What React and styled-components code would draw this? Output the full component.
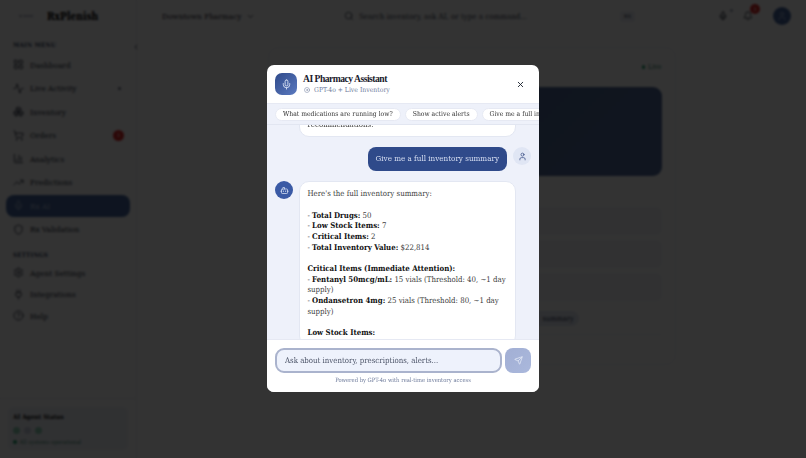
import React, { useLayoutEffect, useRef } from 'react';
import styled, { createGlobalStyle } from 'styled-components';
import {
  Activity, BarChart3, Bell, Bot, Boxes, ChevronDown, ChevronLeft, CircleHelp, Disc, LayoutGrid, Mic, Plug, Search, Send,
  Settings, Shield, ShoppingCart, TrendingUp, User, X,
} from 'lucide-react';

const slab = '"DejaVu Serif Condensed", "DejaVu Serif", "Liberation Serif", serif';

const GlobalStyle = createGlobalStyle`
  html, body { margin: 0; height: 100%; background: #fff; }
  * { box-sizing: border-box; }
  body { font-family: ${slab}; overflow: hidden; }
`;

const Shell = styled.div`
  display: flex;
  width: 806px;
  height: 458px;
  background: #fff;
`;

const Sidebar = styled.aside`
  position: relative;
  width: 137px;
  flex: none;
  display: flex;
  flex-direction: column;
  border-right: 1px solid #eef0f5;
  background: #fdfdfe;
`;

const Brand = styled.div`
  display: flex;
  align-items: center;
  gap: 14px;
  height: 32px;
  padding-left: 18px;
`;

const BrandName = styled.span`
  font-size: 10.2px;
  font-weight: 700;
  color: #000;
`;

const CollapseButton = styled.span`
  position: absolute;
  right: -6px;
  top: 41px;
  width: 12px;
  height: 12px;
  display: flex;
  align-items: center;
  justify-content: center;
  color: #111827;
`;

const SectionLabel = styled.div`
  padding: ${(p) => p.$pad};
  font-size: 6.2px;
  font-weight: 700;
  letter-spacing: 0.3px;
  color: #2c3a5a;
`;

const NavItem = styled.div`
  display: flex;
  align-items: center;
  gap: 6px;
  height: 21.5px;
  margin: ${(p) => (p.$tight ? 0 : 1)}px 6px;
  padding: 0 6px 0 8px;
  border-radius: 8px;
  font-size: 8.2px;
  color: ${(p) => (p.$active ? '#a9b8dc' : '#2a3140')};
  background: ${(p) => (p.$active ? '#46669f' : 'transparent')};
  svg { flex: none; width: 11px; height: 11px; margin-left: -1px; }
`;

const NavText = styled.span`
  flex: 1;
`;

const NavBadge = styled.span`
  width: 11px;
  height: 11px;
  border-radius: 50%;
  display: flex;
  align-items: center;
  justify-content: center;
  font-size: 5px;
  color: #fff;
  background: #dc2626;
`;

const NavDot = styled.span`
  width: 3px;
  height: 3px;
  margin-right: 3px;
  border-radius: 50%;
  background: #6b7280;
`;

const StatusWrap = styled.div`
  margin-top: auto;
  padding: 8px;
  border-top: 1px solid #eef0f5;
`;

const StatusCard = styled.div`
  height: 43px;
  padding: 6px 5px;
  border-radius: 6px;
  background: #f1f4fa;
`;

const StatusTitle = styled.div`
  font-size: 6.4px;
  font-weight: 700;
  color: #000;
`;

const StatusDots = styled.div`
  display: flex;
  gap: 4px;
  margin: 6px 0 5px;
`;

const StatusDot = styled.span`
  width: 7px;
  height: 7px;
  border-radius: 50%;
  background: ${(p) => p.$color};
`;

const StatusText = styled.div`
  display: flex;
  align-items: center;
  gap: 3px;
  font-size: 5.8px;
  color: #3d8a70;
`;

const Content = styled.div`
  flex: 1;
  min-width: 0;
  display: flex;
  flex-direction: column;
`;

const TopBar = styled.header`
  height: 32px;
  flex: none;
  display: flex;
  align-items: center;
  padding: 0 15px 0 25px;
  color: #1f2633;
`;

const Pharmacy = styled.div`
  display: flex;
  align-items: center;
  gap: 5px;
  width: 182px;
  font-size: 8.2px;
  svg { width: 9px; height: 9px; }
`;

const SearchBox = styled.div`
  display: flex;
  align-items: center;
  gap: 5px;
  width: 296px;
  height: 20px;
  padding: 0 5px 0 0;
  font-size: 7.9px;
  color: #3c4454;
  svg { width: 10px; height: 10px; }
`;

const SearchText = styled.span`
  flex: 1;
`;

const Kbd = styled.span`
  width: 15px;
  height: 11px;
  border-radius: 3px;
  background: #eceff7;
  font-size: 5px;
  text-align: center;
  line-height: 11px;
`;

const TopIcons = styled.div`
  display: flex;
  align-items: center;
  margin-left: auto;
  gap: 15px;
`;

const TopIcon = styled.span`
  position: relative;
  display: flex;
  svg { width: 10px; height: 10px; }
`;

const TopBadge = styled.span`
  position: absolute;
  top: -7px;
  left: 7px;
  width: 10px;
  height: 10px;
  border-radius: 50%;
  background: #dc2626;
  color: #fff;
  font-size: 5px;
  line-height: 10px;
  text-align: center;
`;

const MicDot = styled.span`
  position: absolute;
  top: -2px;
  right: -5px;
  width: 3px;
  height: 3px;
  border-radius: 50%;
  background: #9aa3b5;
`;

const Avatar = styled.span`
  width: 18px;
  height: 18px;
  margin-left: 5px;
  border-radius: 50%;
  display: flex;
  align-items: center;
  justify-content: center;
  color: #a9b8dc;
  background: #46669f;
  svg { width: 10px; height: 10px; }
`;

const Main = styled.main`
  flex: 1;
  display: flex;
  justify-content: center;
  padding-top: 15px;
`;

const Card = styled.section`
  width: 408px;
  height: 318px;
  padding: 13px;
  border-radius: 10px;
  border: 1px solid #f1f2f6;
`;

const CardHead = styled.div`
  display: flex;
  justify-content: flex-end;
  align-items: center;
  gap: 3px;
  height: 12px;
  margin-bottom: 14px;
  font-size: 7px;
  color: #1f7a5a;
`;

const LiveDot = styled.span`
  width: 3.5px;
  height: 3.5px;
  border-radius: 50%;
  background: #22a06b;
`;

const HeroPanel = styled.div`
  height: 89px;
  margin-bottom: 31px;
  border-radius: 9px;
  background: linear-gradient(135deg, #4c648f, #506a9c);
`;

const StatRow = styled.div`
  height: 28px;
  margin-bottom: 5px;
  border-radius: 6px;
  background: #f3f5fa;
`;

const ChipRow = styled.div`
  display: flex;
  height: 15px;
  margin: 10px 0 0 230px;
`;

const PageChip = styled.span`
  padding: 0 5px 0 31px;
  border-radius: 8px;
  background: #e3e8f3;
  color: #27324d;
  font-size: 7.4px;
  line-height: 15px;
`;

const CardRule = styled.div`
  height: 1px;
  margin-top: 8px;
  background: #f1f2f6;
`;

const Overlay = styled.div`
  position: fixed;
  inset: 0;
  display: flex;
  align-items: center;
  justify-content: center;
  background: rgba(0, 0, 0, 0.8);
  backdrop-filter: blur(1px);
`;

const Modal = styled.div`
  width: 272px;
  height: 327px;
  margin-bottom: 1px;
  display: flex;
  flex-direction: column;
  overflow: hidden;
  border-radius: 7px;
  background: #fff;
  filter: blur(0.25px);
`;

const ModalHeader = styled.div`
  height: 38px;
  flex: none;
  display: flex;
  align-items: center;
  gap: 6px;
  padding: 0 14px 0 8px;
`;

const ModalIcon = styled.span`
  width: 22px;
  height: 22px;
  flex: none;
  border-radius: 7px;
  display: flex;
  align-items: center;
  justify-content: center;
  color: #dbe4f5;
  background: linear-gradient(135deg, #2f4a8a, #5b7ac0);
  svg { width: 11px; height: 11px; }
`;

const ModalTitleBlock = styled.div`
  flex: 1;
`;

const ModalTitle = styled.div`
  font-family: "Liberation Serif", serif;
  font-size: 9.6px;
  letter-spacing: -0.5px;
  line-height: 12px;
  font-weight: 700;
  color: #1a202c;
`;

const ModalSub = styled.div`
  display: flex;
  align-items: center;
  gap: 4px;
  font-size: 6.8px;
  line-height: 10px;
  color: #6f7c9c;
  svg { width: 6px; height: 6px; margin: 0 0 0 1px; }
`;

const CloseButton = styled.span`
  display: flex;
  color: #1a202c;
  svg { width: 9px; height: 9px; }
`;

const Chips = styled.div`
  height: 22px;
  flex: none;
  display: flex;
  align-items: center;
  gap: 4px;
  padding-left: 8px;
  overflow: hidden;
  background: #eef1fa;
  border-top: 1px solid #e6e9f3;
  border-bottom: 1px solid #e2e6f1;
`;

const Chip = styled.span`
  flex: none;
  height: 13px;
  padding: 0 7px;
  border-radius: 7px;
  border: 1px solid #e6e9f3;
  background: #fff;
  color: #333;
  font-size: 6.75px;
  line-height: 11px;
  white-space: nowrap;
`;

const Messages = styled.div`
  flex: 1;
  min-height: 0;
  overflow: hidden;
  display: flex;
  flex-direction: column;
  gap: 10px;
  padding: 8px;
  background: #eef1fa;
`;

const Row = styled.div`
  display: flex;
  flex: none;
  gap: 6px;
  justify-content: ${(p) => (p.$user ? 'flex-end' : 'flex-start')};
  align-items: flex-start;
`;

const BotAvatar = styled.span`
  width: 18px;
  height: 18px;
  flex: none;
  border-radius: 50%;
  display: flex;
  align-items: center;
  justify-content: center;
  color: #dbe4f5;
  background: #3a5aa5;
  svg { width: 9px; height: 9px; }
`;

const UserAvatar = styled(BotAvatar)`
  color: #3a4f86;
  background: #e0e6f4;
`;

const BotBubble = styled.div`
  width: 217px;
  padding: 7px 4px 6px 7.5px;
  border-radius: 10px;
  border: 1px solid #e3e7f2;
  background: #fff;
  color: #3d3d3d;
  font-size: 7.8px;
  line-height: 10.67px;
`;

const UserBubble = styled.div`
  height: 24px;
  padding: 0 8px;
  border-radius: 8px;
  color: #d7dff2;
  background: #2f4a8a;
  font-size: 8px;
  line-height: 24px;
  white-space: nowrap;
`;

const Strong = styled.strong`
  font-weight: 700;
  line-height: 1;
  color: #111;
`;

const Gap = styled.div`
  height: 10.67px;
`;

const InputArea = styled.div`
  height: 53px;
  flex: none;
  padding: 8px 8px 0;
  background: #fff;
  border-top: 1px solid #e6e9f3;
`;

const InputRow = styled.div`
  display: flex;
  gap: 3px;
`;

const AskInput = styled.input`
  flex: 1;
  min-width: 0;
  height: 25px;
  padding: 0 8px;
  border: 2px solid #aab3cd;
  border-radius: 9px;
  outline: none;
  background: #eef2fc;
  font-family: ${slab};
  font-size: 7.8px;
  color: #374151;
  &::placeholder { color: #4c5468; opacity: 1; }
`;

const SendButton = styled.span`
  width: 26px;
  height: 25px;
  flex: none;
  border-radius: 8px;
  display: flex;
  align-items: center;
  justify-content: center;
  color: #e6ebf7;
  background: linear-gradient(135deg, #a2afd4, #aab8dc);
  svg { width: 9px; height: 9px; }
`;

const Powered = styled.div`
  margin-top: 3px;
  text-align: center;
  font-size: 5.8px;
  line-height: 8px;
  color: #6f7c9c;
`;

const mainMenu = [
  { icon: LayoutGrid, label: 'Dashboard' },
  { icon: Activity, label: 'Live Activity', dot: true },
  { icon: Boxes, label: 'Inventory' },
  { icon: ShoppingCart, label: 'Orders', badge: 3 },
  { icon: BarChart3, label: 'Analytics' },
  { icon: TrendingUp, label: 'Predictions' },
  { icon: Mic, label: 'Rx AI', active: true },
  { icon: Shield, label: 'Rx Validation' },
];

const settingsMenu = [
  { icon: Settings, label: 'Agent Settings' },
  { icon: Plug, label: 'Integrations' },
  { icon: CircleHelp, label: 'Help' },
];

const App = () => {
  const listRef = useRef(null);

  useLayoutEffect(() => {
    // the chat opens scrolled part way through the answer
    if (listRef.current) listRef.current.scrollTop = 32;
  }, []);

  return (
    <>
      <GlobalStyle />
      <Shell>
        <Sidebar>
          <Brand>
            <svg width="15" height="6" viewBox="0 0 15 6">
              <path d="M1 1.5 L2.5 3 L4 1.5 L2.5 4.5 Z" fill="#4b5568" />
              <rect x="5" y="2.4" width="10" height="1.2" fill="#9aa3b5" />
            </svg>
            <BrandName>RxPlenish</BrandName>
          </Brand>
          <CollapseButton><ChevronLeft size={8} /></CollapseButton>
          <SectionLabel $pad="9px 13px 5px">MAIN MENU</SectionLabel>
          {mainMenu.map((item) => (
            <NavItem key={item.label} $active={item.active}>
              <item.icon strokeWidth={1.8} />
              <NavText>{item.label}</NavText>
              {item.dot && <NavDot />}
              {item.badge && <NavBadge>{item.badge}</NavBadge>}
            </NavItem>
          ))}
          <SectionLabel $pad="10px 13px 4px">SETTINGS</SectionLabel>
          {settingsMenu.map((item) => (
            <NavItem key={item.label} $tight>
              <item.icon strokeWidth={1.8} />
              <NavText>{item.label}</NavText>
            </NavItem>
          ))}
          <StatusWrap>
            <StatusCard>
              <StatusTitle>AI Agent Status</StatusTitle>
              <StatusDots>
                <StatusDot $color="#8fd0b5" />
                <StatusDot $color="#c9d0e0" />
                <StatusDot $color="#8fd0b5" />
              </StatusDots>
              <StatusText><LiveDot />All systems operational</StatusText>
            </StatusCard>
          </StatusWrap>
        </Sidebar>
        <Content>
          <TopBar>
            <Pharmacy>Downtown Pharmacy <ChevronDown /></Pharmacy>
            <SearchBox>
              <Search />
              <SearchText>Search inventory, ask AI, or type a command...</SearchText>
              <Kbd>⌘K</Kbd>
            </SearchBox>
            <TopIcons>
              <TopIcon><Mic /><MicDot /></TopIcon>
              <TopIcon><Bell /><TopBadge>3</TopBadge></TopIcon>
              <Avatar><User /></Avatar>
            </TopIcons>
          </TopBar>
          <Main>
            <Card>
              <CardHead><LiveDot />Live</CardHead>
              <HeroPanel />
              <StatRow />
              <StatRow />
              <StatRow />
              <ChipRow><PageChip>summary</PageChip></ChipRow>
              <CardRule />
            </Card>
          </Main>
        </Content>
      </Shell>
      <Overlay>
        <Modal>
          <ModalHeader>
            <ModalIcon><Mic /></ModalIcon>
            <ModalTitleBlock>
              <ModalTitle>AI Pharmacy Assistant</ModalTitle>
              <ModalSub><Disc />GPT-4o + Live Inventory</ModalSub>
            </ModalTitleBlock>
            <CloseButton><X strokeWidth={2.4} /></CloseButton>
          </ModalHeader>
          <Chips>
            <Chip>What medications are running low?</Chip>
            <Chip>Show active alerts</Chip>
            <Chip>Give me a full inventory summary</Chip>
          </Chips>
          <Messages ref={listRef}>
            <Row>
              <BotAvatar><Bot /></BotAvatar>
              <BotBubble>Let me know if you need any more detail or further recommendations.</BotBubble>
            </Row>
            <Row $user>
              <UserBubble>Give me a full inventory summary</UserBubble>
              <UserAvatar><User /></UserAvatar>
            </Row>
            <Row>
              <BotAvatar><Bot /></BotAvatar>
              <BotBubble>
                Here's the full inventory summary:
                <Gap />
                - <Strong>Total Drugs:</Strong> 50<br />
                - <Strong>Low Stock Items:</Strong> 7<br />
                - <Strong>Critical Items:</Strong> 2<br />
                - <Strong>Total Inventory Value:</Strong> $22,814
                <Gap />
                <Strong>Critical Items (Immediate Attention):</Strong><br />
                - <Strong>Fentanyl 50mcg/mL:</Strong> 15 vials (Threshold: 40, ~1 day supply)<br />
                - <Strong>Ondansetron 4mg:</Strong> 25 vials (Threshold: 80, ~1 day supply)
                <Gap />
                <Strong>Low Stock Items:</Strong>
              </BotBubble>
            </Row>
          </Messages>
          <InputArea>
            <InputRow>
              <AskInput placeholder="Ask about inventory, prescriptions, alerts..." />
              <SendButton><Send /></SendButton>
            </InputRow>
            <Powered>Powered by GPT-4o with real-time inventory access</Powered>
          </InputArea>
        </Modal>
      </Overlay>
    </>
  );
};

export default App;
